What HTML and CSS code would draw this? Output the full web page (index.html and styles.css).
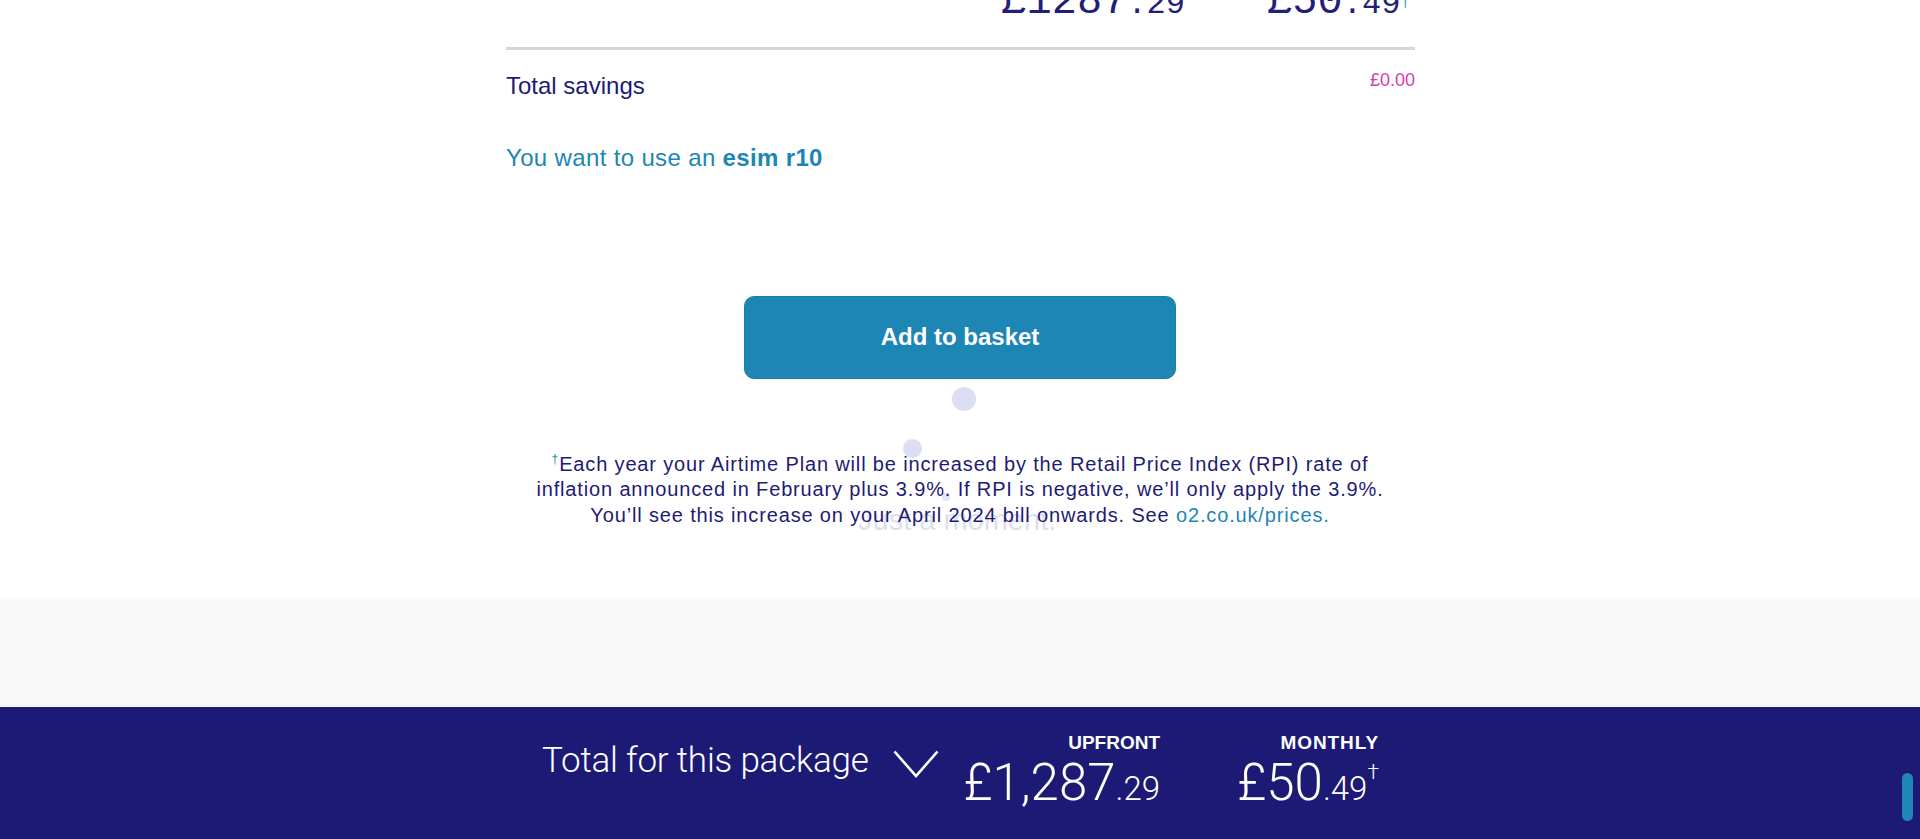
FILE: index.html
```html
<!DOCTYPE html>
<html lang="en">
<head>
<meta charset="utf-8">
<title>Basket summary</title>
<link rel="stylesheet" href="styles.css">
</head>
<body>
<div class="page">
  <main class="content">
    <section class="summary">
      <div class="top-prices">
        <span></span>
        <div class="tp-cell"><span class="tp-big">£1287</span><span class="tp-small">.29</span></div>
        <div class="tp-cell"><span class="tp-big">£50</span><span class="tp-small">.49</span><sup class="tp-dagger">†</sup></div>
      </div>
      <div class="divider"></div>
      <div class="savings-row">
        <span class="savings-label">Total savings</span>
        <span class="savings-value">£0.00</span>
      </div>
      <p class="esim">You want to use an <strong>esim r10</strong></p>
    </section>

    <div class="cta">
      <button class="btn-basket" type="button">Add to basket</button>
    </div>

    <p class="footnote"><sup class="fn-dagger">†</sup>Each year your Airtime Plan will be increased by the Retail Price Index (RPI) rate of<br>inflation announced in February plus 3.9%. If RPI is negative, we’ll only apply the 3.9%.<br>You’ll see this increase on your April 2024 bill onwards. See <a class="fn-link" href="#">o2.co.uk/prices.</a></p>

    <div class="loader" aria-hidden="true">
      <span class="dot dot-a"></span>
      <span class="dot dot-b"></span>
      <span class="dot dot-c"></span>
      <span class="loader-text">Just a moment.</span>
    </div>
  </main>

  <div class="grey-band"></div>

  <footer class="total-bar">
    <div class="total-inner">
      <div class="total-title">
        <span class="total-text">Total for this package</span>
        <svg class="chevron" width="46" height="28" viewBox="0 0 46 28"><polyline points="1.5,1.5 23,26 44.5,1.5" fill="none" stroke="#ffffff" stroke-width="2.6" stroke-linejoin="miter"/></svg>
      </div>
      <div class="total-col">
        <span class="col-label">UPFRONT</span>
        <span class="col-price"><span class="cp-big">£1,287</span><span class="cp-small">.29</span></span>
      </div>
      <div class="total-col">
        <span class="col-label col-label-wide">MONTHLY</span>
        <span class="col-price"><span class="cp-big">£50</span><span class="cp-small">.49</span><sup class="cp-dagger">†</sup></span>
      </div>
    </div>
  </footer>

  <span class="scroll-pill" aria-hidden="true"></span>
</div>
</body>
</html>
```

FILE: styles.css
```css
* { box-sizing: border-box; }

html, body {
  margin: 0;
  padding: 0;
  height: 839px;
  overflow: hidden;
  background: #ffffff;
  font-family: "Liberation Sans", Arial, sans-serif;
  color: #1e1b74;
}

.page {
  position: relative;
  height: 839px;
}

.content {
  position: relative;
  height: 598px;
}

.summary {
  width: 909px;
  margin-left: 506px;
}

.top-prices {
  display: grid;
  grid-template-columns: 1fr 225px 225px;
  padding-right: 5px;
  height: 47px;
  align-items: start;
}

.tp-cell {
  text-align: right;
  font-family: "Liberation Mono", monospace;
  color: #231f78;
  line-height: 1;
  margin-top: -19px;
  white-space: nowrap;
}

.tp-big { font-size: 42px; }
.tp-small { font-size: 32px; }
.tp-dagger {
  font-size: 16px;
  color: #1e86b4;
  vertical-align: 7px;
  line-height: 0;
}

.divider {
  height: 3px;
  background: #d6d6d6;
}

.savings-row {
  display: flex;
  justify-content: space-between;
  align-items: flex-start;
  margin-top: 22px;
}

.savings-label {
  font-size: 24px;
  line-height: 1.2;
}

.savings-value {
  font-size: 18px;
  line-height: 1.2;
  color: #d23ea6;
  margin-top: -2px;
}

.esim {
  margin: 43px 0 0;
  font-size: 24px;
  line-height: 1.2;
  letter-spacing: 0.35px;
  color: #1e86b4;
}

.esim strong { font-weight: 700; }

.cta {
  display: flex;
  justify-content: center;
  margin-top: 123px;
}

.btn-basket {
  width: 432px;
  height: 83px;
  border: 1px solid #1b7caa;
  border-radius: 10px;
  background: #1e86b4;
  color: #ffffff;
  font-family: "Liberation Sans", Arial, sans-serif;
  font-size: 24px;
  font-weight: 700;
  cursor: pointer;
}

.footnote {
  margin: 73px 0 0;
  text-align: center;
  font-size: 20px;
  letter-spacing: 0.85px;
  line-height: 25.5px;
  color: #1e1b74;
  position: relative;
  z-index: 2;
}

.fn-dagger {
  font-size: 12px;
  color: #1e86b4;
  vertical-align: 8px;
  line-height: 0;
}

.fn-link {
  color: #1e86b4;
  text-decoration: none;
}

.loader {
  position: absolute;
  inset: 0;
  pointer-events: none;
  z-index: 1;
}

.dot {
  position: absolute;
  border-radius: 50%;
  background: #dcdff2;
}

.dot-a { left: 952px; top: 387px; width: 24px; height: 24px; }
.dot-b { left: 903px; top: 439px; width: 19px; height: 19px; }
.dot-c { left: 942px; top: 493px; width: 8px; height: 8px; background: #e3e5f4; }

.loader-text {
  position: absolute;
  left: 858px;
  top: 506px;
  font-size: 29px;
  line-height: 1;
  color: #dddff1;
}

.grey-band {
  height: 109px;
  background: #f9f9f9;
}

.total-bar {
  height: 132px;
  background: #1d1a75;
  color: #ffffff;
}

.total-inner {
  width: 837px;
  margin-left: 542px;
  display: grid;
  grid-template-columns: 397px 221px 219px;
  align-items: start;
}

.total-title {
  display: flex;
  align-items: center;
  justify-content: space-between;
  padding-top: 33px;
}

.total-text {
  font-family: "Roboto", "Liberation Sans", sans-serif;
  font-weight: 300;
  font-size: 35px;
  line-height: 1.2;
  letter-spacing: -0.2px;
}

.chevron { display: block; margin-top: 6px; }

.total-col {
  display: flex;
  flex-direction: column;
  align-items: flex-end;
  padding-top: 25px;
}

.col-label {
  font-size: 19px;
  font-weight: 700;
  line-height: 1.2;
}

.col-label-wide { letter-spacing: 0.9px; }

.col-price {
  font-family: "Roboto", "Liberation Sans", sans-serif;
  font-weight: 300;
  line-height: 1;
  white-space: nowrap;
  margin-top: 2px;
}

.cp-big { font-size: 51px; }
.cp-small { font-size: 33px; }
.cp-dagger {
  font-size: 21px;
  vertical-align: 21px;
  line-height: 0;
}

.scroll-pill {
  position: absolute;
  left: 1902px;
  top: 773px;
  width: 11px;
  height: 48px;
  border-radius: 6px;
  background: #1f86b5;
}
```
